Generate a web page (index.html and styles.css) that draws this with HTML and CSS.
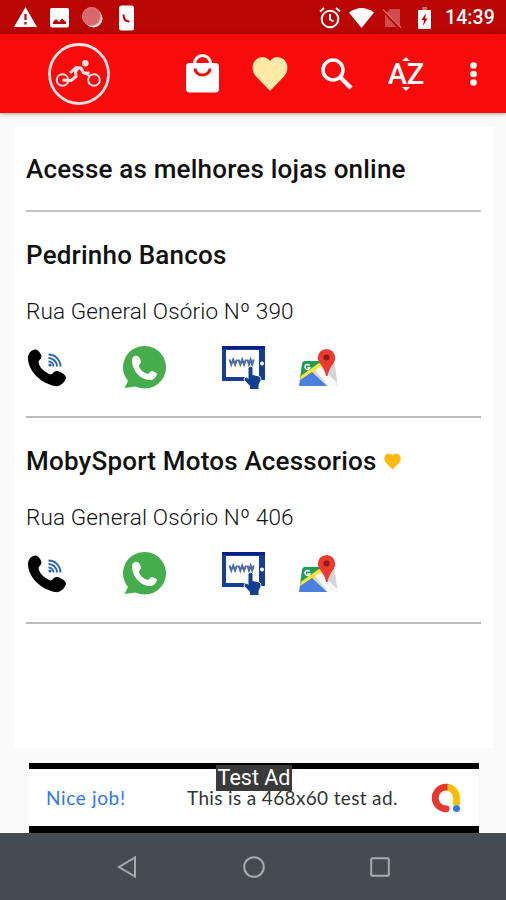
FILE: index.html
```
<!DOCTYPE html>
<html lang="pt-BR">
<head>
  <meta charset="UTF-8">
  <meta name="viewport" content="width=device-width, initial-scale=1.0">
  <title>Lojas online</title>
  <link rel="stylesheet" href="styles.css">
</head>
<body>
  <!-- Desenhos usados nas duas lojas -->
  <svg class="simbolos">
    <symbol id="telefone" viewBox="0 0 38 38">
      <path d="M0 9C0 4 4 0 8 .500c2 0 5.500 4.500 5.500 7.500 0 2-3 3-3 5 1 6 6 10 12 12.500 2 0 3-3.500 6.500-3.500 3 0 9 4 9 6.500-1 5-6 9.500-11 8.500C13 34.500 0 22 0 9z" fill="#000"/>
      <g fill="none" stroke="#1f63bd" stroke-width="1.800">
        <path d="M20.500 12.500a5 5 0 0 1 5 5M20.500 9a8.500 8.500 0 0 1 8.500 8.500M20.500 5.500a12 12 0 0 1 12 12"/>
      </g>
      <circle cx="22" cy="16" r="1.600" fill="#1f63bd"/>
    </symbol>
    <symbol id="whatsapp" viewBox="0 0 43 43">
      <path d="M21.500 0a21.300 21.300 0 1 1-9 40.500L1.500 42l3.500-7A21.300 21.300 0 0 1 21.500 0z" fill="#46ad4c"/>
      <path d="M9 14c0-3 3-5 5-4 2 0 4 4 4 6 0 1-2 2-2 4 1 4 5 7 9 8 1 0 2-3 4-3 1 0 5 2 5 3-1 4-4 6-7 6C17 34 9 24 9 14z" fill="#fff"/>
    </symbol>
    <symbol id="site" viewBox="0 0 44 43">
      <path d="M0 0h43v34h-6V4H4v27h19v4H0z" fill="#123f93"/>
      <path d="M0 0h43v3H0z" fill="#0a1f86"/>
      <circle cx="40" cy="17.500" r="2" fill="#fff"/>
      <path d="M7.500 13.500l1.800 5 1.900-5 1.900 5 1.800-5M16.500 13.500l1.800 5 1.900-5 1.900 5 1.800-5M25.500 13.500l1.500 5 1.600-5 1.600 5 1.500-5" fill="none" stroke="#4c6aa6" stroke-width="2"/>
      <path d="M26.500 22q2.500-3 4 0v7l6.500 1.500q2 1 1.500 4L36.500 39v4H28v-3l-5.500-6q0-3 2-2.500l2 1.500z" fill="#123f93" stroke="#fff" stroke-width="1.500" paint-order="stroke"/>
    </symbol>
    <symbol id="mapa" viewBox="0 0 39 38">
      <path d="M6 12h27q2 0 2.500 2L39 37H0l3-22q.5-3 3-3z" fill="#d6d6d6"/>
      <path d="M6 12h18L1 30l2-15q.5-3 3-3z" fill="#1f9d58"/>
      <path d="M20 14h8L1 34l.7-7z" fill="#fce33a"/>
      <path d="M0 37l1-6 12-8 15 14z" fill="#4a80dd"/>
      <path d="M16 21l5-3.500L38.500 34l.5 3H29z" fill="#f8f8f8"/>
      <path d="M10.500 16.500a2.500 2.500 0 1 0 .4 2.200H8.500" fill="none" stroke="#fff" stroke-width="1.500"/>
      <path d="M27.500 0a8.700 8.700 0 0 1 8.700 8.700c0 6-5.700 8-7.700 18.300h-1.500c-1.500-10.300-8.200-12.300-8.200-18.300A8.700 8.700 0 0 1 27.500 0z" fill="#eb3a30"/>
      <circle cx="27.500" cy="8.500" r="3" fill="#8c1a15"/>
    </symbol>
    <symbol id="coracao" viewBox="0 0 36 34">
      <path d="M18 34L4 19.500C-2 13 0 1 10 0c3.500 0 6 1.500 8 4 2-2.500 4.500-4 8-4 10 1 12 13 6 19.500z" fill="currentColor"/>
    </symbol>
  </svg>

  <div class="status">
    <div class="status-grupo avisos">
      <svg width="23" height="21" viewBox="0 0 23 21"><path d="M11.500 0L23 20H0z" fill="#fff"/><path d="M11.500 7v6M11.500 15v2.500" stroke="#b90503" stroke-width="2.200"/></svg>
      <svg width="19" height="20" viewBox="0 0 19 20"><rect width="19" height="19.500" rx="2" fill="#fff"/><path d="M3 16v-2l3-3 3 3 3-3.500 4 3.500v2z" fill="#b90503"/></svg>
      <svg width="21" height="21" viewBox="0 0 21 21"><circle cx="11.500" cy="11.500" r="9" fill="#ffdcdc"/><circle cx="9.500" cy="9.500" r="9.200" fill="#d7696a" stroke="#e9a0a0" stroke-width=".6"/></svg>
      <svg width="15" height="26" viewBox="0 0 15 26"><rect y=".5" width="15" height="25" rx="2.500" fill="#fff"/><path d="M4.500 9.500q0 7 6 7" fill="none" stroke="#b90503" stroke-width="2"/></svg>
    </div>
    <div class="status-grupo sistema">
      <svg width="22" height="22" viewBox="0 0 22 22" fill="none" stroke="#fff" stroke-width="2"><circle cx="11" cy="12" r="8.300"/><path d="M11 7v5.500l3.500 2M1 4.500L5 1M21 4.500L17 1"/></svg>
      <svg width="25" height="20" viewBox="0 0 25 20"><path d="M0 4.500Q12.500-4.500 25 4.500L12.500 20z" fill="#fff"/></svg>
      <svg width="20" height="20" viewBox="0 0 20 20"><path d="M8 1h10v18H3V6z" fill="#cf4d4b"/><path d="M1 3l16 17" stroke="#b90503" stroke-width="2"/><path d="M1 1.500l18 18" stroke="#d76462" stroke-width="1.500"/></svg>
      <svg width="13" height="22" viewBox="0 0 13 22"><path d="M4 0h5v3H4z" fill="#d76462"/><rect y="3" width="13" height="19" rx="1" fill="#fff"/><path d="M8 6l-4.500 7H6l-1 6 4.500-7.500H7z" fill="#b90503"/></svg>
      <span class="hora">14:39</span>
    </div>
  </div>

  <header class="barra">
    <svg class="logo" width="62" height="62" viewBox="0 0 62 62" fill="none" stroke="#ffe3e3">
      <circle cx="31" cy="31" r="29.500" stroke-width="2.800"/>
      <circle cx="14.500" cy="37" r="5.800" stroke-width="2"/>
      <circle cx="46" cy="37" r="5.800" stroke-width="2"/>
      <path d="M14.500 37l8.500.500 5-4-.500-5 2.500-3" stroke-width="3" stroke-linejoin="round"/>
      <path d="M22 30l6-5.500 5 .5 2.500 5 6 0" stroke-width="3" stroke-linejoin="round"/>
      <path d="M35 29l7 4.500" stroke-width="2"/>
      <circle cx="37.300" cy="20.300" r="3.300" fill="#ffe3e3" stroke="none"/>
    </svg>
    <div class="acoes">
      <svg width="33" height="39" viewBox="0 0 33 39">
        <path d="M8.500 13V9.500a8 8 0 0 1 16 0V13" fill="none" stroke="#fff" stroke-width="3"/>
        <rect y="9" width="33" height="29.500" rx="3.500" fill="#fff"/>
        <path d="M12 9a4.700 4.200 0 0 1 9 0z" fill="#f90a0b"/>
        <path d="M9 14.500a7.500 6.500 0 0 0 15 0" fill="none" stroke="#f90a0b" stroke-width="3"/>
      </svg>
      <svg class="coracao-barra" width="36" height="34"><use href="#coracao"/></svg>
      <svg width="32" height="32" viewBox="0 0 32 32" fill="none" stroke="#fff"><circle cx="12" cy="12" r="10" stroke-width="3.500"/><path d="M19 19l11 11" stroke-width="4.500"/></svg>
      <div class="ordenar">
        <svg width="8" height="4" viewBox="0 0 8 4"><path d="M4 0l4 4H0z" fill="#fff"/></svg>
        <span>AZ</span>
        <svg width="8" height="4" viewBox="0 0 8 4"><path d="M0 0h8L4 4z" fill="#fff"/></svg>
      </div>
      <svg width="7" height="24" viewBox="0 0 7 24" fill="#fff"><circle cx="3.500" cy="3.500" r="3.300"/><circle cx="3.500" cy="12" r="3.300"/><circle cx="3.500" cy="20.500" r="3.300"/></svg>
    </div>
  </header>

  <main class="conteudo">
    <div class="lista">
      <h1 class="titulo chamada">Acesse as melhores lojas online</h1>

      <section class="loja">
        <h2 class="titulo">Pedrinho Bancos</h2>
        <p class="endereco">Rua General Osório Nº 390</p>
        <div class="contatos">
          <svg class="ic-fone"><use href="#telefone"/></svg>
          <svg class="ic-whats"><use href="#whatsapp"/></svg>
          <svg class="ic-site"><use href="#site"/></svg>
          <svg class="ic-mapa"><use href="#mapa"/></svg>
        </div>
      </section>

      <section class="loja">
        <h2 class="titulo com-favorito">MobySport Motos Acessorios <svg class="favorito"><use href="#coracao"/></svg></h2>
        <p class="endereco">Rua General Osório Nº 406</p>
        <div class="contatos">
          <svg class="ic-fone"><use href="#telefone"/></svg>
          <svg class="ic-whats"><use href="#whatsapp"/></svg>
          <svg class="ic-site"><use href="#site"/></svg>
          <svg class="ic-mapa"><use href="#mapa"/></svg>
        </div>
      </section>
    </div>

    <div class="anuncio">
      <span class="anuncio-link">Nice job!</span>
      <span class="anuncio-texto">This is a 468x60 test ad.</span>
      <svg class="anuncio-logo" width="30" height="30" viewBox="0 0 30 30" fill="none" stroke-width="6.800">
        <path d="M15 4.200a10.500 10.500 0 0 1 10.500 10.500V22" stroke="#fbbc04"/>
        <path d="M16.500 4.200H15a10.800 10.800 0 0 0 0 21.600" stroke="#e5392f"/>
        <circle cx="15.200" cy="25.800" r="3.400" fill="#e5392f" stroke="none"/>
        <circle cx="25.500" cy="25.500" r="3.500" fill="#3379e8" stroke="none"/>
      </svg>
      <span class="selo">Test Ad</span>
    </div>
  </main>

  <nav class="navegacao">
    <svg width="20" height="22" viewBox="0 0 20 22"><path d="M18 1.500v19L2 11z"/></svg>
    <svg width="22" height="22" viewBox="0 0 22 22"><circle cx="11" cy="11" r="9.800"/></svg>
    <svg width="20" height="20" viewBox="0 0 20 20"><rect x="1.200" y="1.200" width="17.600" height="17.600" rx="1"/></svg>
  </nav>
</body>
</html>
```
FILE: styles.css
```
* {
  margin: 0;
  padding: 0;
  box-sizing: border-box;
}

body {
  width: 506px;
  height: 900px;
  display: flex;
  flex-direction: column;
  overflow: hidden;
  background: #fafafa;
  font-family: Roboto, sans-serif;
  color: #111;
}

svg {
  display: block;
  flex-shrink: 0;
}

.simbolos {
  position: absolute;
  width: 0;
  height: 0;
}

/* ===== Barra de status ===== */
.status {
  height: 34px;
  flex-shrink: 0;
  display: flex;
  justify-content: space-between;
  padding: 1px 11px 0 14px;
  background: #b90503;
}

.status-grupo {
  display: flex;
  align-items: center;
}

.avisos {
  gap: 13px;
}

.avisos svg:nth-child(4) {
  margin-left: 3px;
}

.sistema {
  gap: 8px;
}

.sistema svg:nth-child(4) {
  margin-left: 8px;
}

.hora {
  width: 50px;
  margin-left: 6px;
  color: #fff;
  font-size: 19.5px;
  font-weight: 500;
  letter-spacing: 0.1px;
  white-space: nowrap;
}

/* ===== Barra do app ===== */
.barra {
  height: 79px;
  flex-shrink: 0;
  display: flex;
  align-items: center;
  justify-content: space-between;
  padding: 0 29px 0 48px;
  background: #f90a0b;
  box-shadow: 0 1px 4px rgba(0, 0, 0, 0.35);
  z-index: 1;
}

.acoes {
  display: flex;
  align-items: center;
}

.coracao-barra {
  margin: 0 33px 0 33px;
  color: #ffe9a8;
}

.ordenar {
  width: 38px;
  margin: 0 45px 0 34px;
  display: flex;
  flex-direction: column;
  align-items: center;
  color: #fff;
  font-size: 29px;
  font-weight: 500;
  line-height: 26px;
}

/* ===== Lista de lojas ===== */
.conteudo {
  flex: 1;
  display: flex;
  flex-direction: column;
  padding: 14px 13px 0 14px;
}

.lista {
  height: 621px;
  flex-shrink: 0;
  padding: 0 12px;
  background: #fff;
}

.titulo {
  font-size: 26px;
  font-weight: 500;
  line-height: 30px;
  letter-spacing: 0.2px;
  white-space: nowrap;
}

.chamada {
  height: 85px;
  padding-top: 27px;
  border-bottom: 2px solid #c4c4c4;
}

.loja {
  height: 206px;
  padding-top: 28px;
  border-bottom: 2px solid #bababa;
}

.com-favorito {
  display: flex;
  align-items: center;
  gap: 7px;
}

.favorito {
  width: 17px;
  height: 17px;
  color: #fdb80d;
}

.endereco {
  margin-top: 27px;
  font-size: 22.5px;
  line-height: 28px;
  letter-spacing: 0.15px;
  font-weight: 300;
  white-space: nowrap;
}

.contatos {
  height: 43px;
  margin-top: 21px;
  padding-left: 2px;
  display: flex;
  align-items: center;
}

.ic-fone {
  width: 38px;
  height: 38px;
}

.ic-whats {
  width: 43px;
  height: 43px;
  margin-left: 57px;
}

.ic-site {
  width: 44px;
  height: 43px;
  margin-left: 56px;
}

.ic-mapa {
  width: 39px;
  height: 38px;
  margin-left: 33px;
}

/* ===== Anúncio ===== */
.anuncio {
  position: relative;
  width: 450px;
  height: 70px;
  margin: 15px 0 0 15px;
  padding: 0 18px 0 17px;
  display: flex;
  align-items: center;
  border-top: 6px solid #000;
  border-bottom: 7px solid #000;
  background: #fff;
  font-family: Lato, sans-serif;
  font-size: 19px;
  letter-spacing: 0.35px;
  white-space: nowrap;
}

.anuncio-link {
  width: 141px;
  color: #2b79f0;
  letter-spacing: 0.65px;
}

.anuncio-texto {
  color: #333;
}

.anuncio-logo {
  margin-left: auto;
}

.selo {
  position: absolute;
  top: -4px;
  left: 187px;
  width: 76px;
  height: 26px;
  background: #3a3a3a;
  color: #fff;
  font-family: Roboto, sans-serif;
  font-size: 21.5px;
  letter-spacing: 0;
  line-height: 26px;
  text-align: center;
}

/* ===== Navegação do Android ===== */
.navegacao {
  height: 67px;
  flex-shrink: 0;
  display: flex;
  align-items: center;
  justify-content: space-between;
  padding: 0 116px 0 117px;
  background: #454c51;
  fill: none;
  stroke: #a5aaad;
  stroke-width: 2;
}
```
